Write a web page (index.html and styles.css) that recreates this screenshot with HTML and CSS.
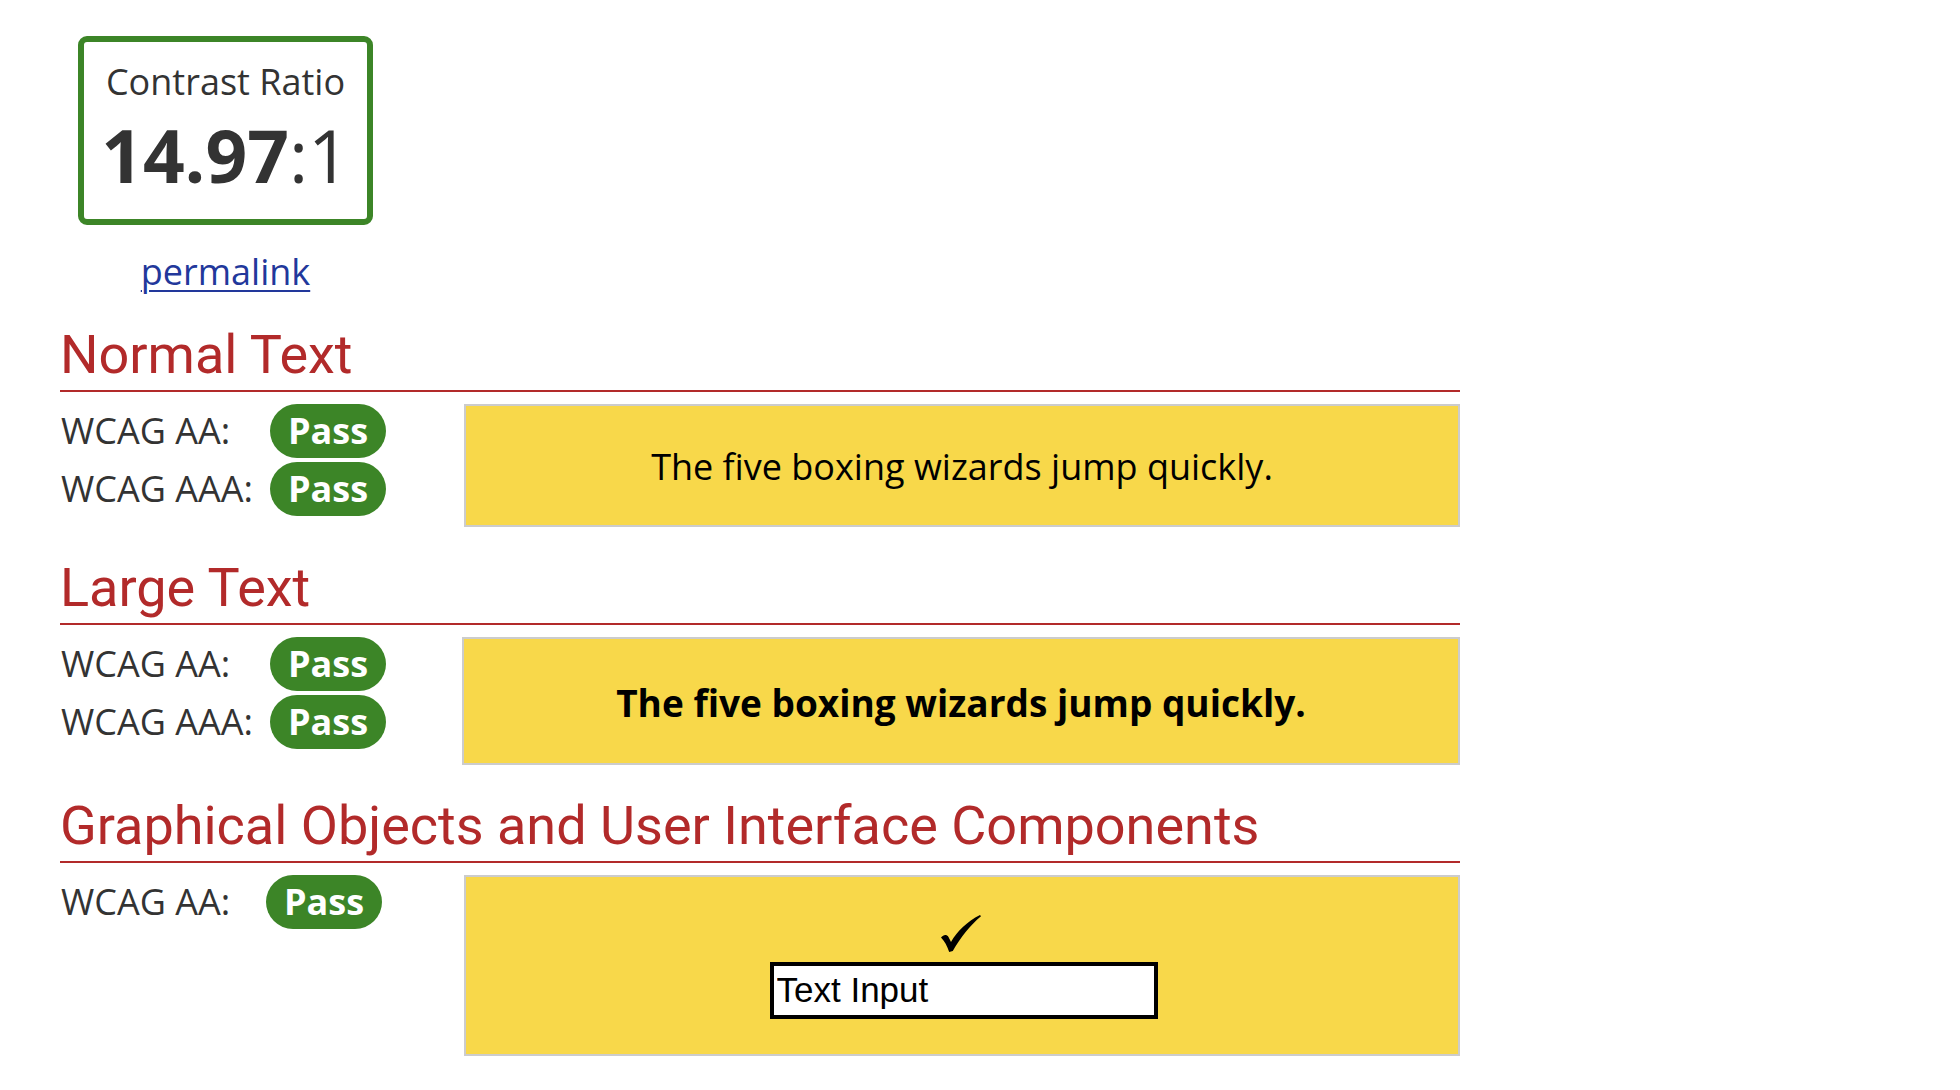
FILE: index.html
```html
<!DOCTYPE html>
<html lang="en">
<head>
<meta charset="utf-8">
<title>Contrast Checker</title>
<link rel="stylesheet" href="styles.css">
</head>
<body>
<main class="page">
  <div class="summary">
    <div class="ratio-box">
      <div class="ratio-label">Contrast Ratio</div>
      <div class="ratio-value"><b>14.97</b>:1</div>
    </div>
    <a class="permalink" href="#">permalink</a>
  </div>

  <section class="section">
    <h2 class="section-title">Normal Text</h2>
    <div class="row">
      <div class="checks">
        <span class="label">WCAG AA:</span><span class="badge">Pass</span>
        <span class="label">WCAG AAA:</span><span class="badge">Pass</span>
      </div>
      <div class="sample sample-normal">The five boxing wizards jump quickly.</div>
    </div>
  </section>

  <section class="section">
    <h2 class="section-title">Large Text</h2>
    <div class="row">
      <div class="checks">
        <span class="label">WCAG AA:</span><span class="badge">Pass</span>
        <span class="label">WCAG AAA:</span><span class="badge">Pass</span>
      </div>
      <div class="sample sample-large">The five boxing wizards jump quickly.</div>
    </div>
  </section>

  <section class="section section-last">
    <h2 class="section-title">Graphical Objects and User Interface Components</h2>
    <div class="row">
      <div class="checks checks-single">
        <span class="label">WCAG AA:</span><span class="badge">Pass</span>
      </div>
      <div class="sample sample-ui">
        <svg class="check" width="40" height="37" viewBox="0 0 40 37" aria-hidden="true">
          <path d="M0 22.5 C2.5 19.5 5.5 19 7.5 22 L10 27 C16 16.5 26 6.5 39 0 L40 1.2 C29 10.5 19.5 22.5 11.8 36 L8.2 37 C6.2 31 3.5 26 0 22.5 Z" fill="#000"/>
        </svg>
        <input class="text-input" type="text" value="Text Input" readonly>
      </div>
    </div>
  </section>
</main>
</body>
</html>
```

FILE: styles.css
```css
html, body {
  margin: 0;
  padding: 0;
  background: #fff;
}

body {
  font-family: "Open Sans", "Noto Sans", sans-serif;
  color: #333;
}

.page {
  width: 1400px;
  padding: 36px 0 0 60px;
}

.summary {
  width: 295px;
  margin-left: 18px;
  display: flex;
  flex-direction: column;
  align-items: center;
}

.ratio-box {
  box-sizing: border-box;
  width: 295px;
  height: 189px;
  border: 6px solid #3c8527;
  border-radius: 9px;
  padding-top: 15px;
  text-align: center;
}

.ratio-label {
  font-size: 36px;
  line-height: normal;
}

.ratio-value {
  font-size: 73px;
  line-height: 76px;
  margin-top: 11px;
  font-weight: 400;
}

.ratio-value b {
  font-weight: 700;
}

.permalink {
  margin-top: 22px;
  font-size: 36px;
  color: #22389b;
  text-decoration: underline;
  text-underline-offset: 5px;
  text-decoration-thickness: 2px;
}

.section {
  margin-top: 27px;
}

.section + .section {
  margin-top: 29px;
}

.section-title {
  margin: 0;
  font-family: Roboto, "Liberation Sans", sans-serif;
  font-weight: 400;
  font-size: 54px;
  line-height: 64px;
  color: #b22a2a;
  padding-bottom: 3px;
  border-bottom: 2px solid #b22a2a;
}

.row {
  display: flex;
  align-items: flex-start;
  margin-top: 12px;
}

.checks {
  width: 404px;
  flex: none;
  display: grid;
  grid-template-columns: 210px 116px;
  row-gap: 4px;
  align-items: center;
}

.checks-single {
  grid-template-columns: 206px 116px;
}

.label {
  font-size: 36px;
  line-height: 54px;
  padding-left: 1px;
  white-space: nowrap;
}

.badge {
  display: flex;
  align-items: center;
  justify-content: center;
  width: 116px;
  height: 54px;
  border-radius: 27px;
  background: #3c8527;
  color: #fff;
  font-weight: 700;
  font-size: 36px;
  line-height: 54px;
}

.sample {
  flex: 1;
  box-sizing: border-box;
  background: #f8d84a;
  border: 2px solid #cccccc;
  color: #000;
  display: flex;
  align-items: center;
  justify-content: center;
}

.sample-normal {
  height: 123px;
  font-size: 36px;
  padding-top: 2px;
}

.sample-large {
  height: 128px;
  margin-left: -2px;
  font-size: 37px;
  font-weight: 700;
  padding-top: 2px;
}

.sample-ui {
  height: 181px;
  flex-direction: column;
  padding-top: 2px;
}

.check {
  display: block;
  margin-bottom: 10px;
  margin-right: 3px;
}

.text-input {
  box-sizing: border-box;
  width: 388px;
  height: 57px;
  margin: 0 0 0 3px;
  border: 4px solid #000;
  border-radius: 0;
  background: #fff;
  padding: 0 3px;
  font-family: "Liberation Sans", Arial, sans-serif;
  font-size: 35px;
  color: #000;
  outline: none;
}
```
